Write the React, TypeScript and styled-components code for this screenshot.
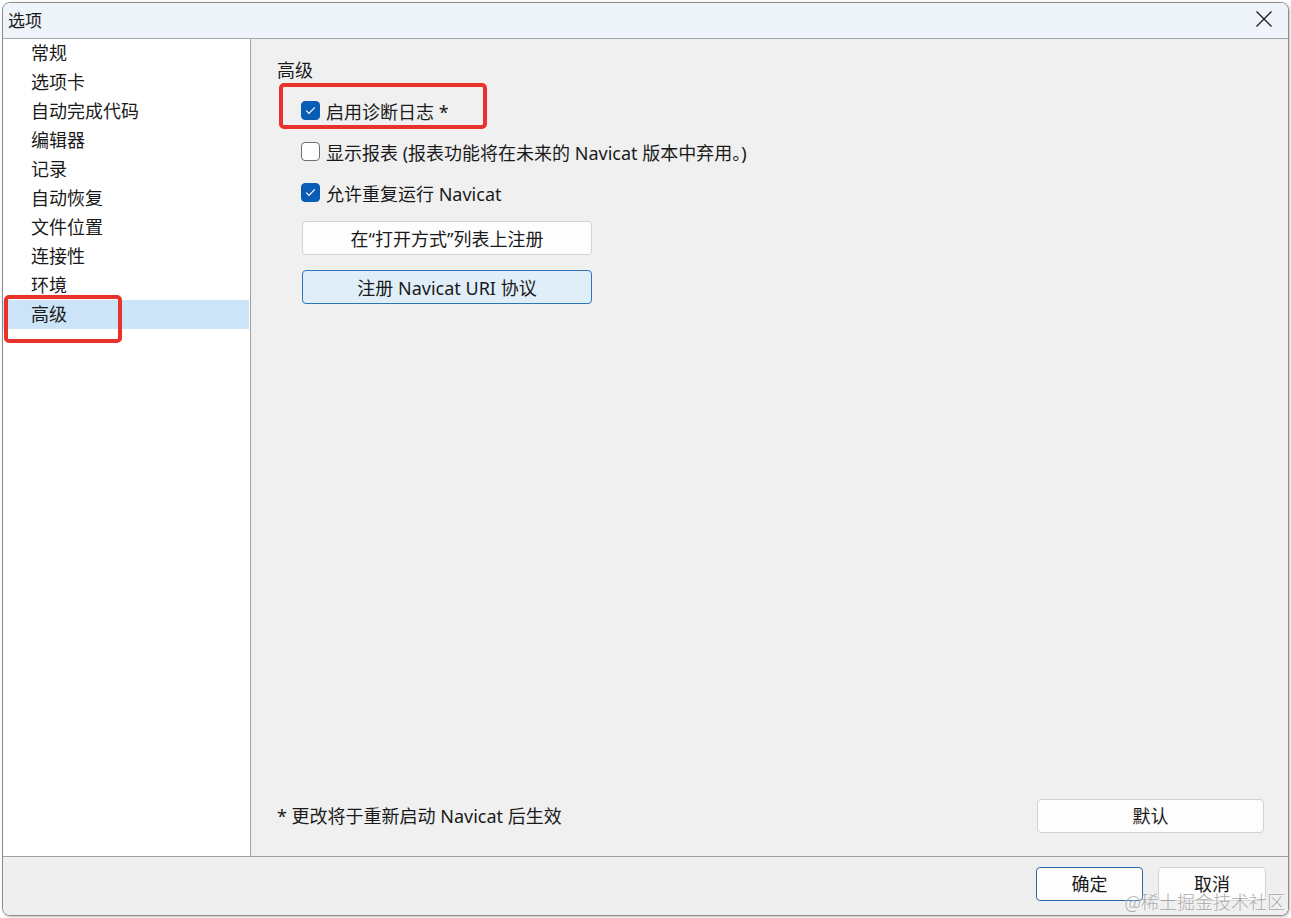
import React from "react";
import styled, { createGlobalStyle } from "styled-components";

const Global = createGlobalStyle`
  html, body { margin: 0; padding: 0; background: #ffffff; }
  body { font-family: "Noto Sans", "Noto Sans CJK SC", sans-serif; color: #1a1a1a; }
  * { box-sizing: border-box; }
`;

const Stage = styled.div`
  position: relative;
  width: 1291px;
  height: 918px;
  padding: 2px 0 0 2px;
`;

const Window = styled.div`
  width: 1287px;
  height: 914px;
  border: 1px solid #8c8c8c;
  border-radius: 8px;
  overflow: hidden;
  display: flex;
  flex-direction: column;
  background: #f0f0f0;
  box-shadow: 1px 1px 3px rgba(0, 0, 0, 0.25);
`;

const TitleBar = styled.div`
  height: 36px;
  flex: none;
  display: flex;
  align-items: center;
  justify-content: space-between;
  padding: 0 14px 3px 5px;
  background: #eef4f9;
  border-bottom: 1px solid #a6a6a6;
  font-size: 17px;
`;

const CloseButton = styled.div`
  width: 20px;
  height: 20px;
  display: flex;
  align-items: center;
  justify-content: center;
`;

const Body = styled.div`
  flex: 1;
  display: flex;
  min-height: 0;
  border-bottom: 1px solid #a0a0a0;
`;

const Sidebar = styled.div`
  width: 248px;
  flex: none;
  background: #ffffff;
  border-right: 1px solid #a0a0a0;
`;

const NavItem = styled.div<{ $active?: boolean }>`
  height: 29px;
  line-height: 28px;
  padding-left: 28px;
  font-size: 18px;
  background: ${(p) => (p.$active ? "#cce4f7" : "transparent")};
  margin-right: 1px;
`;

const Main = styled.div`
  flex: 1;
  display: flex;
  flex-direction: column;
  padding: 19px 24px 23px 26px;
`;

const Heading = styled.div`
  font-size: 18px;
  line-height: 24px;
`;

const Options = styled.div`
  display: flex;
  flex-direction: column;
  padding-left: 24px;
  margin-top: 8px;
`;

const CheckRow = styled.label`
  height: 41px;
  display: flex;
  align-items: center;
  gap: 6px;
  font-size: 18px;
`;

const Box = styled.span<{ $checked?: boolean }>`
  width: 19px;
  height: 19px;
  border-radius: 4px;
  flex: none;
  display: flex;
  align-items: center;
  justify-content: center;
  background: ${(p) => (p.$checked ? "#0a5db4" : "#ffffff")};
  border: 1px solid ${(p) => (p.$checked ? "#0a5db4" : "#6e6e6e")};
`;

const WideButton = styled.div<{ $focused?: boolean }>`
  width: 290px;
  height: 34px;
  margin-left: 1px;
  display: flex;
  align-items: center;
  justify-content: center;
  font-size: 18px;
  padding-bottom: 1px;
  border-radius: 4px;
  background: ${(p) => (p.$focused ? "#e0eef9" : "#fdfdfd")};
  border: 1px solid ${(p) => (p.$focused ? "#2e75b8" : "#d2d2d2")};
  & + & {
    margin-top: 15px;
  }
`;

const Buttons = styled.div`
  display: flex;
  flex-direction: column;
  margin-top: 8px;
`;

const Spacer = styled.div`
  flex: 1;
`;

const BottomRow = styled.div`
  display: flex;
  align-items: center;
  justify-content: space-between;
`;

const Note = styled.div`
  font-size: 18px;
  padding-bottom: 2px;
`;

const PushButton = styled.div<{ $w: number; $primary?: boolean }>`
  width: ${(p) => p.$w}px;
  height: 34px;
  display: flex;
  align-items: center;
  justify-content: center;
  font-size: 18px;
  padding-bottom: 2px;
  border-radius: 4px;
  background: #fdfdfd;
  border: 1px solid ${(p) => (p.$primary ? "#2a6aa6" : "#d2d2d2")};
`;

const Footer = styled.div`
  height: 58px;
  flex: none;
  display: flex;
  justify-content: flex-end;
  align-items: flex-start;
  gap: 15px;
  padding: 10px 22px 0 0;
  background: #efefef;
`;

const Annotation = styled.div<{ $x: number; $y: number; $w: number; $h: number }>`
  position: absolute;
  left: ${(p) => p.$x}px;
  top: ${(p) => p.$y}px;
  width: ${(p) => p.$w}px;
  height: ${(p) => p.$h}px;
  border: 4px solid #e8322b;
  border-radius: 5px;
  pointer-events: none;
`;

const Watermark = styled.div`
  position: absolute;
  right: 6px;
  bottom: 4px;
  font-family: "Noto Sans CJK SC", sans-serif;
  font-size: 18px;
  font-weight: 300;
  color: rgba(140, 140, 140, 0.75);
  text-shadow: 0 0 2px #ffffff;
`;

const Check = () => (
  <svg width="11" height="9" viewBox="0 0 11 9">
    <path d="M1.2 4.6 L4 7.4 L9.8 1.4" fill="none" stroke="#ffffff" strokeWidth="1.2" />
  </svg>
);

const navItems = ["常规", "选项卡", "自动完成代码", "编辑器", "记录", "自动恢复", "文件位置", "连接性", "环境", "高级"];

const CheckOption = ({ checked, label }: { checked?: boolean; label: string }) => (
  <CheckRow>
    <Box $checked={checked}>{checked && <Check />}</Box>
    <span>{label}</span>
  </CheckRow>
);

export default function App() {
  return (
    <Stage>
      <Global />
      <Window>
        <TitleBar>
          <span>选项</span>
          <CloseButton>
            <svg width="18" height="18" viewBox="0 0 18 18">
              <path d="M1.5 1.5 L16.5 16.5 M16.5 1.5 L1.5 16.5" stroke="#1a1a1a" strokeWidth="1.3" />
            </svg>
          </CloseButton>
        </TitleBar>
        <Body>
          <Sidebar>
            {navItems.map((n) => (
              <NavItem key={n} $active={n === "高级"}>
                {n}
              </NavItem>
            ))}
          </Sidebar>
          <Main>
            <Heading>高级</Heading>
            <Options>
              <CheckOption checked label="启用诊断日志 *" />
              <CheckOption label="显示报表 (报表功能将在未来的 Navicat 版本中弃用。)" />
              <CheckOption checked label="允许重复运行 Navicat" />
              <Buttons>
                <WideButton>在“打开方式”列表上注册</WideButton>
                <WideButton $focused>注册 Navicat URI 协议</WideButton>
              </Buttons>
            </Options>
            <Spacer />
            <BottomRow>
              <Note>* 更改将于重新启动 Navicat 后生效</Note>
              <PushButton $w={227}>默认</PushButton>
            </BottomRow>
          </Main>
        </Body>
        <Footer>
          <PushButton $w={107} $primary>
            确定
          </PushButton>
          <PushButton $w={108}>取消</PushButton>
        </Footer>
      </Window>
      <Annotation $x={279} $y={83} $w={208} $h={46} />
      <Annotation $x={4} $y={295} $w={118} $h={48} />
      <Watermark>@稀土掘金技术社区</Watermark>
    </Stage>
  );
}
